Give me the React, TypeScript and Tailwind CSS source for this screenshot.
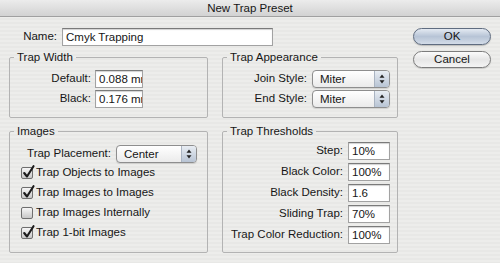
import type { ReactNode } from "react";

function Field({ className, children }: { className: string; children: ReactNode }) {
  return (
    <div
      className={`h-[18px] overflow-hidden whitespace-nowrap border border-[#a2a2a2] border-t-[#7a7a7a] bg-white pl-[3px] leading-[16px] shadow-[inset_0_1px_1px_rgba(0,0,0,0.18)] ${className}`}
    >
      {children}
    </div>
  );
}

function Popup({ className, value }: { className: string; value: string }) {
  return (
    <div
      className={`flex h-[18px] overflow-hidden rounded-[4px] border border-[#8e8e8e] bg-gradient-to-b from-white to-[#ebebeb] shadow-[0_1px_1px_rgba(0,0,0,0.12)] ${className}`}
    >
      <span className="flex-1 pl-[7px] leading-[16px]">{value}</span>
      <span className="flex w-[15px] items-center justify-center border-l border-[#aab4c2] bg-gradient-to-b from-[#e8edf3] to-[#b8c4d4]">
        <svg width="6" height="10" viewBox="0 0 6 10">
          <path d="M3 0.5 L5.5 3.8 H0.5 Z" fill="#222" />
          <path d="M3 9.5 L5.5 6.2 H0.5 Z" fill="#222" />
        </svg>
      </span>
    </div>
  );
}

function Check({ checked, label }: { checked: boolean; label: string }) {
  return (
    <div className="flex h-[20px] items-center pl-[11px]">
      <span className="relative flex h-[12px] w-[12px] items-center justify-center rounded-[2px] border border-[#6f6f6f] bg-gradient-to-b from-[#f6f6f6] to-[#c8c8c8]">
        {checked && (
          <svg className="absolute -top-[3px] left-[0px]" width="13" height="14" viewBox="0 0 13 14">
            <path d="M2.2 8 L5 11.5 L11.5 1.2" fill="none" stroke="#1c1c1c" strokeWidth="2.1" strokeLinecap="round" strokeLinejoin="round" />
          </svg>
        )}
      </span>
      <span className="ml-[3px]">{label}</span>
    </div>
  );
}

function Group({ title, className, children }: { title: string; className: string; children: ReactNode }) {
  return (
    <fieldset className={`rounded-[2px] border border-[#b3b3b3] ${className}`}>
      <legend className="ml-[4px] px-[3px] leading-[12px]">{title}</legend>
      {children}
    </fieldset>
  );
}

const thresholds = [
  ["Step:", "10%"],
  ["Black Color:", "100%"],
  ["Black Density:", "1.6"],
  ["Sliding Trap:", "70%"],
  ["Trap Color Reduction:", "100%"],
];

export default function App() {
  return (
    <div className="h-[263px] w-[500px] overflow-hidden bg-[repeating-linear-gradient(180deg,#ededeb_0px,#ededeb_2px,#e8e8e6_2px,#e8e8e6_4px)] font-['Liberation_Sans',Arial,sans-serif] text-[11.5px] text-[#161616]">
      <div className="h-[17px] border-b border-[#a0a0a0] bg-gradient-to-b from-[#ececec] to-[#d2d2d2] text-center leading-[16px]">
        New Trap Preset
      </div>

      <div className="flex pl-[9px] pt-[11px]">
        <div className="w-[389px]">
          {/* Name */}
          <div className="flex h-[18px] items-center">
            <span className="w-[48px] text-right">Name:</span>
            <Field className="ml-[5px] w-[211px]">Cmyk Trapping</Field>
          </div>

          <div className="mt-[5px] flex gap-[14px]">
            <Group title="Trap Width" className="h-[67px] w-[199px]">
              <div className="pt-[7px]">
                <div className="flex items-center">
                  <span className="w-[81px] text-right">Default:</span>
                  <Field className="ml-[4px] w-[48px]">0.088 mm</Field>
                </div>
                <div className="mt-[2px] flex items-center">
                  <span className="w-[81px] text-right">Black:</span>
                  <Field className="ml-[4px] w-[48px]">0.176 mm</Field>
                </div>
              </div>
            </Group>

            <Group title="Trap Appearance" className="h-[67px] w-[176px]">
              <div className="pt-[7px]">
                <div className="flex items-center">
                  <span className="w-[84px] text-right">Join Style:</span>
                  <Popup className="ml-[5px] w-[78px]" value="Miter" />
                </div>
                <div className="mt-[2px] flex items-center">
                  <span className="w-[84px] text-right">End Style:</span>
                  <Popup className="ml-[5px] w-[78px]" value="Miter" />
                </div>
              </div>
            </Group>
          </div>

          <div className="mt-[7px] flex gap-[14px]">
            <Group title="Images" className="h-[128px] w-[199px]">
              <div className="pt-[8px]">
                <div className="flex items-center">
                  <span className="w-[101px] text-right">Trap Placement:</span>
                  <Popup className="ml-[5px] w-[81px]" value="Center" />
                </div>
                <Check checked label="Trap Objects to Images" />
                <Check checked label="Trap Images to Images" />
                <Check checked={false} label="Trap Images Internally" />
                <Check checked label="Trap 1-bit Images" />
              </div>
            </Group>

            <Group title="Trap Thresholds" className="h-[128px] w-[176px]">
              <div className="flex flex-col gap-[3px] pt-[5px]">
                {thresholds.map(([label, value]) => (
                  <div key={label} className="flex items-center">
                    <span className="w-[120px] text-right">{label}</span>
                    <Field className="ml-[5px] w-[42px]">{value}</Field>
                  </div>
                ))}
              </div>
            </Group>
          </div>
        </div>

        {/* Buttons */}
        <div className="ml-[15px] w-[78px]">
          <div className="h-[17px] rounded-full border border-[#5f6c80] bg-gradient-to-b from-[#e4eaf2] via-[#b7c4d6] to-[#d3dce8] text-center leading-[15px] shadow-[0_1px_1px_rgba(0,0,0,0.2)]">
            OK
          </div>
          <div className="mt-[6px] h-[17px] rounded-full border border-[#7c7c7c] bg-gradient-to-b from-[#fbfbfb] via-[#e6e6e6] to-[#f4f4f4] text-center leading-[15px] shadow-[0_1px_1px_rgba(0,0,0,0.15)]">
            Cancel
          </div>
        </div>
      </div>
    </div>
  );
}
